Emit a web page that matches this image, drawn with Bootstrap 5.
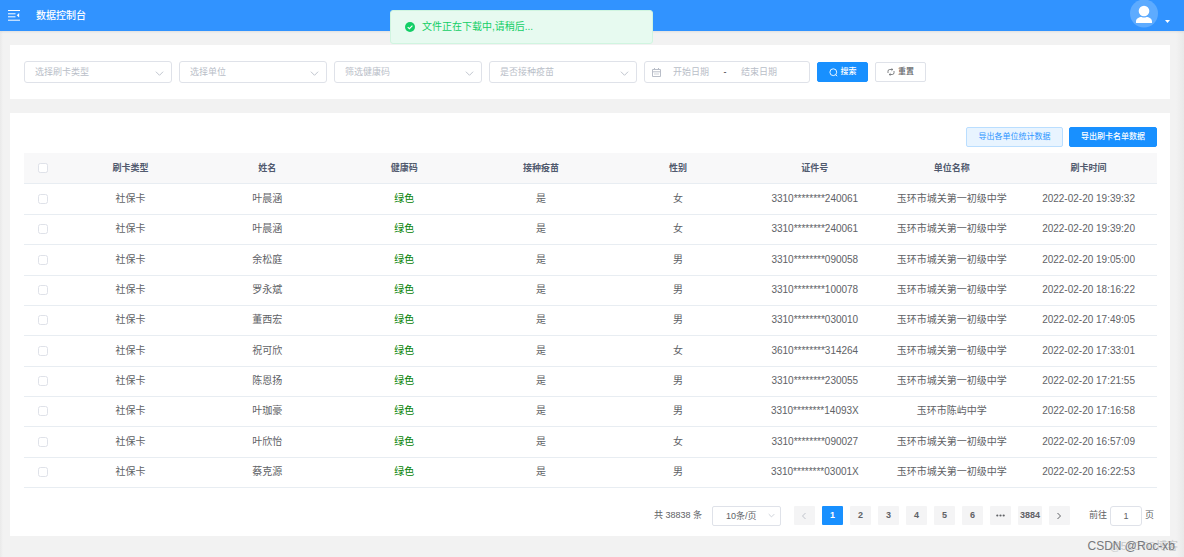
<!DOCTYPE html>
<html lang="zh-CN">
<head>
<meta charset="utf-8">
<meta name="viewport" content="width=device-width, initial-scale=1">
<title>数据控制台</title>
<link href="https://cdn.jsdelivr.net/npm/bootstrap@5.3.0/dist/css/bootstrap.min.css" rel="stylesheet">
<style>
:root { --line: #dfe2e9; --blue: #1890ff; --muted: #b9bec8; --text: #606266; }
body { font-family: "Liberation Sans", "Noto Sans CJK SC", sans-serif; font-size: 10px; line-height: 14px; color: var(--text);
  background: linear-gradient(90deg, #e9e9e9, #f2f2f2 3px, #f2f2f2 calc(100% - 8px), #e9e9e9); min-height: 100vh; }
.topbar { height: 31px; background: #3193ff; color: #fff; box-shadow: 0 1px 2px rgba(0,0,0,.08); }
.brand-name { font-weight: 500; margin-left: 16px; }
.plain-btn { background: none; border: 0; padding: 0; color: inherit; display: flex; }
.toast-msg { position: absolute; top: 10px; left: 50%; width: 263px; height: 34px; margin-left: -202px; padding-left: 14px; gap: 7px;
  background: #e7faf0; border: 1px solid #d0f5e0; border-radius: 3px; color: #13ce66; z-index: 5; }
.page-body { padding: 14px 14px 0 10px; }
.panel { background: #fff; padding: 14px 13px 10px 14px; }
.panel-filters { padding-bottom: 14px; margin-bottom: 14px; }
.filters { height: 26px; gap: 7px; }
.filters .form-select, .date-range { height: 22px; width: 148px; font-size: 9px; line-height: 12px; color: var(--muted); border: 1px solid var(--line); border-radius: 3px; background-color: #fff; }
.form-select { background-image: url("data:image/svg+xml,%3Csvg xmlns='http://www.w3.org/2000/svg' viewBox='0 0 10 10'%3E%3Cpath d='M1 3l4 4 4-4' fill='none' stroke='%23b9bec8'/%3E%3C/svg%3E"); }
.filters .form-select { padding: 4px 24px 4px 10px; background-size: 9px 9px; background-position: right 7px top 7px; }
.filters .date-range { width: 166px; padding-left: 7px; }
.date-range input { border: 0; padding: 0; width: 60px; height: 18px; text-align: center; background: none; color: inherit; }
.date-range input::placeholder { color: var(--muted); }
.date-range .dash { width: 8px; text-align: center; color: #303133; }
.tool { height: 20px; padding: 0 10px; font-size: 8px; line-height: 16px; border-radius: 2px; font-weight: 500; gap: 3px; display: inline-flex; align-items: center; justify-content: center; }
.filters .tool { width: 51px; padding: 0; }
.tool-main { background: var(--blue); border-color: var(--blue); color: #fff; }
.tool-line { background: #fff; border-color: var(--line); color: var(--text); }
.tool-soft { background: #e8f4ff; border-color: #badeff; color: #2c94ff; font-weight: 400; }
.exports { gap: 6px; margin-bottom: 6px; }
.exports .tool { width: 97px; padding: 0; }
.exports .tool-main { width: 88px; }
.records { table-layout: fixed; margin: 0; text-align: center; color: var(--text); }
.records > * > tr > * { height: 30px; padding: 0; vertical-align: middle; border-bottom: 1px solid #e8edf2; color: inherit; white-space: nowrap; }
.records > tbody > tr:nth-child(3n) > *, .records > tbody > tr:first-child > * { height: 31px; }
.records > thead > tr > th { background: #f8f8f9; color: #515a6e; font-size: 9px; font-weight: 600; }
.records .pick { width: 38px; }
.records > tbody > tr > td:nth-child(4) { color: #008000; }
.tick { width: 10px; height: 10px; margin: 0; border: 1px solid var(--line); border-radius: 2px; display: block; margin-inline: auto; min-height: 0; }
.pager { margin-top: 18px; padding-right: 3px; font-size: 9px; line-height: 13px; }
.pager .form-select { width: 69px; height: 20px; margin: 0 13px 0 10px; padding: 0 20px 0 13px; font-size: 9px; line-height: 14px; color: var(--text); border: 1px solid var(--line); border-radius: 2px; background-size: 7px 7px; background-position: right 5px center; }
.pagination { gap: 7px; }
.pagination .page-link { min-width: 21px; height: 19px; padding: 0 2px; display: flex; align-items: center; justify-content: center; font-size: 9px; font-weight: 700; border: 0; margin: 0; border-radius: 1px; background: #f4f4f5; color: var(--text); }
.pagination .page-item:last-child .page-link, .pagination .page-item:first-child .page-link { border-radius: 1px; }
.pagination .page-item:not(:first-child) .page-link { margin-left: 0; }
.pagination .active .page-link { background: var(--blue); color: #fff; }
.pagination .disabled .page-link { color: #c0c4cc; }
.jump { margin-left: 19px; gap: 3px; }
.jump input { width: 32px; height: 20px; border: 1px solid var(--line); border-radius: 3px; text-align: center; color: var(--text); padding: 0; font-size: 9px; }
.stamps { position: absolute; right: 6px; bottom: 2px; font-size: 12px; line-height: 18px; white-space: nowrap; }
.stamp-front { position: relative; margin-right: 3px; color: #77797c; }
.stamp-back { position: absolute; right: 0; top: 0; color: #c9cacc; font-size: 11px; }
</style>
</head>
<body class="position-relative">
<header class="topbar d-flex align-items-center">
  <button class="plain-btn ms-2" type="button" aria-label="收起菜单">
    <svg width="12" height="11" viewBox="0 0 12 11" fill="none" stroke="#fff"><path d="M0 .5h12M0 3.8h7.5M0 6.8h7.5M0 10.2h12"/><path d="M11.2 3v4.600L8.700 5.300z" fill="#fff" stroke="none"/></svg>
  </button>
  <span class="brand-name">数据控制台</span>
  <button class="plain-btn ms-auto align-self-start" type="button" aria-label="用户菜单">
    <svg width="54" height="28" viewBox="0 0 54 28"><circle cx="14" cy="13.500" r="14" fill="#5dabff"/><circle cx="14" cy="11" r="5.300" fill="#fff"/><path d="M6 23v-1.500c0-3 3-4.500 5.500-4.500q2.500 1 5 0c2.500 0 5.500 1.500 5.500 4.500V23z" fill="#fff"/><path d="M35 20h5l-2.500 3z" fill="#fff"/></svg>
  </button>
</header>
<div class="toast-msg d-flex align-items-center" role="status">
  <svg width="10" height="10" viewBox="0 0 10 10"><circle cx="5" cy="5" r="5" fill="#13ce66"/><path d="M2.700 5.100l1.700 1.600 3-3.100" fill="none" stroke="#fff" stroke-width="1.100"/></svg>
  <span>文件正在下载中,请稍后...</span>
</div>
<main class="page-body">
  <section class="panel panel-filters">
    <form class="filters d-flex align-items-center">
      <select class="form-select" aria-label="刷卡类型"><option>选择刷卡类型</option></select>
      <select class="form-select" aria-label="单位"><option>选择单位</option></select>
      <select class="form-select" aria-label="健康码"><option>筛选健康码</option></select>
      <select class="form-select" aria-label="接种疫苗"><option>是否接种疫苗</option></select>
      <div class="date-range d-flex align-items-center">
        <svg width="9" height="9" viewBox="0 0 9 9" fill="none" stroke="#b9bec8"><path d="M.5 1.500h8v7h-8zM.5 3.800h8M2.500 0v2M6.500 0v2"/><path d="M2 6h5" stroke-width=".7"/></svg>
        <input type="text" placeholder="开始日期" aria-label="开始日期"><span class="dash">-</span><input type="text" placeholder="结束日期" aria-label="结束日期">
      </div>
      <button class="btn tool tool-main" type="button"><svg width="9" height="9" viewBox="0 0 9 9" fill="none" stroke="currentColor" stroke-width=".9"><circle cx="4.300" cy="4.200" r="3.400"/><path d="M6.700 6.700l1.500 1.500"/></svg>搜索</button>
      <button class="btn tool tool-line" type="button"><svg width="8" height="8" viewBox="0 0 8 8" fill="none" stroke="currentColor" stroke-width=".8"><path d="M1 5V3.200Q1 1.500 2.700 1.500H5.500M7 3v1.800Q7 6.500 5.300 6.500H2.500M4.500.3L5.800 1.500 4.500 2.700M3.500 5.300L2.200 6.500 3.500 7.700"/></svg>重置</button>
    </form>
  </section>
  <section class="panel">
    <div class="exports d-flex justify-content-end">
      <button class="btn tool tool-soft" type="button">导出各单位统计数据</button>
      <button class="btn tool tool-main" type="button">导出刷卡名单数据</button>
    </div>
    <table class="table records">
      <thead><tr><th class="pick"><input class="form-check-input tick" type="checkbox" aria-label="全选"></th><th>刷卡类型</th><th>姓名</th><th>健康码</th><th>接种疫苗</th><th>性别</th><th>证件号</th><th>单位名称</th><th>刷卡时间</th></tr></thead>
      <tbody id="rows"></tbody>
    </table>
    <div class="pager d-flex align-items-center justify-content-end">
      <span>共 38838 条</span>
      <select class="form-select" aria-label="每页条数"><option>10条/页</option></select>
      <nav aria-label="分页">
        <ul class="pagination mb-0">
          <li class="page-item disabled"><a class="page-link" href="#" aria-label="上一页"><svg width="8" height="8" viewBox="0 0 8 8" fill="none" stroke="currentColor"><path d="M5.500 1l-3 3 3 3"/></svg></a></li>
          <li class="page-item active"><a class="page-link" href="#">1</a></li>
          <li class="page-item"><a class="page-link" href="#">2</a></li>
          <li class="page-item"><a class="page-link" href="#">3</a></li>
          <li class="page-item"><a class="page-link" href="#">4</a></li>
          <li class="page-item"><a class="page-link" href="#">5</a></li>
          <li class="page-item"><a class="page-link" href="#">6</a></li>
          <li class="page-item"><a class="page-link" href="#" aria-label="更多"><svg width="9" height="3" viewBox="0 0 9 3" fill="currentColor"><circle cx="1.300" cy="1.500" r="1.100"/><circle cx="4.500" cy="1.500" r="1.100"/><circle cx="7.700" cy="1.500" r="1.100"/></svg></a></li>
          <li class="page-item"><a class="page-link" href="#">3884</a></li>
          <li class="page-item"><a class="page-link" href="#" aria-label="下一页"><svg width="8" height="8" viewBox="0 0 8 8" fill="none" stroke="currentColor"><path d="M2.500 1l3 3-3 3"/></svg></a></li>
        </ul>
      </nav>
      <div class="jump d-flex align-items-center"><label for="goto">前往</label><input id="goto" type="text" value="1"><span>页</span></div>
    </div>
  </section>
</main>
<div class="stamps"><span class="stamp-back">@51CTO博客</span><span class="stamp-front">CSDN @Roc-xb</span></div>
<script src="https://cdn.jsdelivr.net/npm/bootstrap@5.3.0/dist/js/bootstrap.bundle.min.js"></script>
<script>
const school = '玉环市城关第一初级中学';
const records = [
  ['叶晨涵', '女', '3310********240061', school, '19:39:32'],
  ['叶晨涵', '女', '3310********240061', school, '19:39:20'],
  ['余松庭', '男', '3310********090058', school, '19:05:00'],
  ['罗永斌', '男', '3310********100078', school, '18:16:22'],
  ['董西宏', '男', '3310********030010', school, '17:49:05'],
  ['祝可欣', '女', '3610********314264', school, '17:33:01'],
  ['陈恩扬', '男', '3310********230055', school, '17:21:55'],
  ['叶珈豪', '男', '3310********14093X', '玉环市陈屿中学', '17:16:58'],
  ['叶欣怡', '女', '3310********090027', school, '16:57:09'],
  ['蔡克源', '男', '3310********03001X', school, '16:22:53']
];
document.getElementById('rows').innerHTML = records.map(([name, sex, id, unit, time]) =>
  `<tr><td><input class="form-check-input tick" type="checkbox" aria-label="选择 ${name}"></td><td>社保卡</td><td>${name}</td><td>绿色</td><td>是</td><td>${sex}</td><td>${id}</td><td>${unit}</td><td>2022-02-20 ${time}</td></tr>`).join('');
</script>
</body>
</html>
